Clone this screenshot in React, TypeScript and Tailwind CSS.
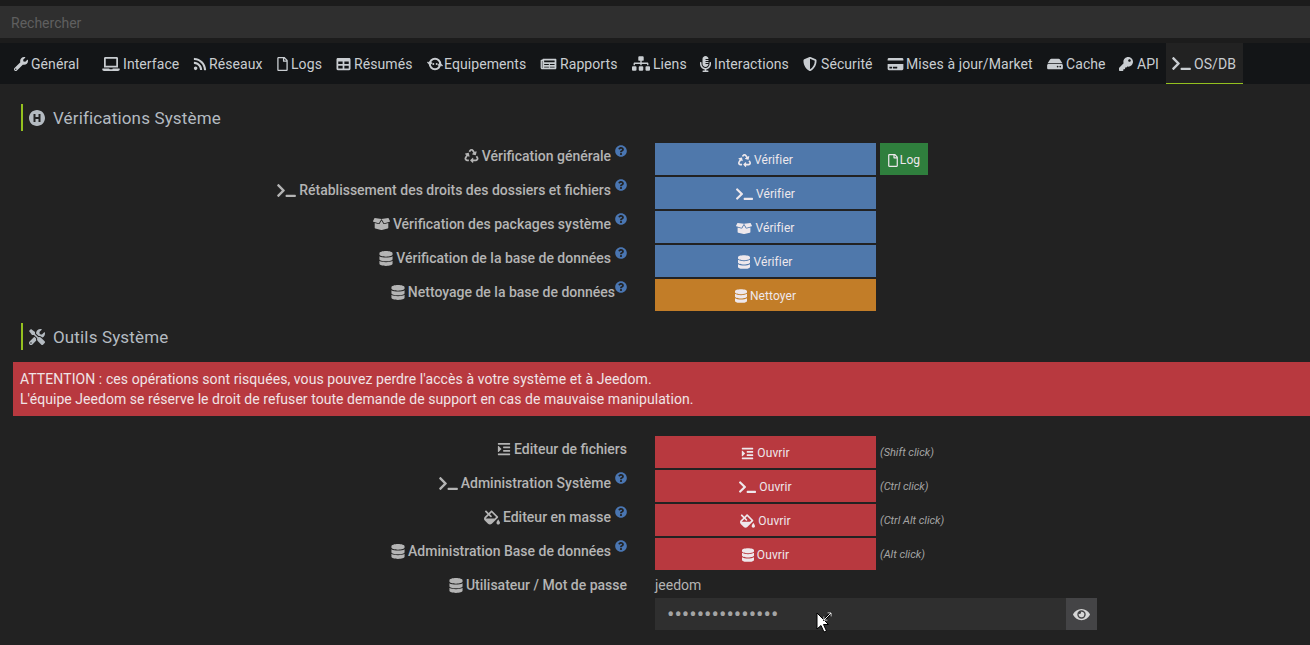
import { ReactNode } from "react";
import {
  FaWrench,
  FaLaptop,
  FaRss,
  FaRegFile,
  FaTable,
  FaNewspaper,
  FaSitemap,
  FaMicrophoneAlt,
  FaShieldAlt,
  FaCreditCard,
  FaHdd,
  FaKey,
  FaTerminal,
  FaHospitalSymbol,
  FaRecycle,
  FaBoxOpen,
  FaDatabase,
  FaTools,
  FaIndent,
  FaFillDrip,
  FaEye,
  FaQuestionCircle,
} from "react-icons/fa";

// jeedom's own "equipements" glyph, not in the icon packs
function EquipIcon() {
  return (
    <svg viewBox="0 0 16 16" className="w-[16px] h-[16px]" fill="none" stroke="currentColor">
      <circle cx="8" cy="8" r="5.2" strokeWidth="2" />
      <path d="M0.5 6 L3 8.5 L5 6.5 M15.5 10 L13 7.5 L11 9.5" strokeWidth="1.4" />
      <circle cx="6.3" cy="8" r="1" fill="currentColor" stroke="none" />
      <circle cx="9.7" cy="8" r="1" fill="currentColor" stroke="none" />
    </svg>
  );
}

const tabs = [
  { label: "Général", icon: <FaWrench className="w-[14px] h-[14px]" />, w: "w-[88px]", gap: "gap-[3px]" },
  { label: "Interface", icon: <FaLaptop className="w-[18px] h-[14px]" />, w: "w-[91px]", gap: "gap-[3px]" },
  { label: "Réseaux", icon: <FaRss className="w-[14px] h-[14px]" />, w: "w-[84px]", gap: "gap-[2px]" },
  { label: "Logs", icon: <FaRegFile className="w-[11px] h-[14px]" />, w: "w-[59px]", gap: "gap-[3px]" },
  { label: "Résumés", icon: <FaTable className="w-[15px] h-[14px]" />, w: "w-[91px]", gap: "gap-[3px]" },
  { label: "Equipements", icon: <EquipIcon />, w: "w-[113px]", gap: "gap-[1px]" },
  { label: "Rapports", icon: <FaNewspaper className="w-[17px] h-[14px]" />, w: "w-[92px]", gap: "gap-[3px]" },
  { label: "Liens", icon: <FaSitemap className="w-[18px] h-[15px]" />, w: "w-[68px]", gap: "gap-[3px]" },
  { label: "Interactions", icon: <FaMicrophoneAlt className="w-[11px] h-[16px]" />, w: "w-[103px]", gap: "gap-[3px]" },
  { label: "Sécurité", icon: <FaShieldAlt className="w-[14px] h-[14px]" />, w: "w-[84px]", gap: "gap-[4px]" },
  { label: "Mises à jour/Market", icon: <FaCreditCard className="w-[17px] h-[14px]" />, w: "w-[160px]", gap: "gap-[2px]" },
  { label: "Cache", icon: <FaHdd className="w-[16px] h-[14px]" />, w: "w-[72px]", gap: "gap-[3px]" },
  { label: "API", icon: <FaKey className="w-[14px] h-[14px]" />, w: "w-[54px]", gap: "gap-[4px]" },
];

function SectionTitle({ icon, children }: { icon: ReactNode; children: ReactNode }) {
  return (
    <div className="ml-[21px] h-[27px] border-l-2 border-[#94c11f] pl-[6px] flex items-center gap-[8px] text-[17px] tracking-[0.15px] text-[#b4bbc1]">
      <span className="w-[16px] flex justify-center">{icon}</span>
      <span className="pt-[2px]">{children}</span>
    </div>
  );
}

function Row({
  icon,
  label,
  help = true,
  tight = false,
  color,
  btnIcon,
  btnLabel,
  side,
}: {
  icon: ReactNode;
  label: string;
  help?: boolean;
  tight?: boolean;
  color: string;
  btnIcon: ReactNode;
  btnLabel: string;
  side?: ReactNode;
}) {
  return (
    <div className="flex h-[32px] mb-[2px]">
      <div className="w-[614px] flex justify-end items-start pt-[3px] text-[14px] font-medium text-[#b4b4b4]">
        <span className="flex items-center gap-[3px] h-[20px]">
          {icon}
          {label}
        </span>
        {help ? (
          <FaQuestionCircle
            className={`w-[12px] h-[12px] text-[#4a76b2] shrink-0 -mt-[1px] ${tight ? "" : "ml-[4px]"}`}
          />
        ) : null}
      </div>
      <div
        className={`ml-[28px] w-[221px] pt-[2px] flex items-center justify-center gap-[3px] text-[12px] tracking-[0.1px] text-[#eee8ec] ${color}`}
      >
        {btnIcon}
        {btnLabel}
      </div>
      {side}
    </div>
  );
}

const dbLabel = "w-[14px] h-[15px]";
const dbBtn = "w-[12px] h-[14px]";
const termLabel = "w-[19px] h-[15px]";
const termBtn = "w-[17px] h-[14px]";
const blue = "bg-[#4f78ab]";
const orange = "bg-[#c27d28]";
const red = "bg-[#b8393f]";

function ClickHint({ text }: { text: string }) {
  return <span className="ml-[4px] pt-[2px] self-center text-[11px] italic text-[#a5a5a5]">{text}</span>;
}

export default function App() {
  return (
    <div
      className="relative h-[645px] w-[1310px] overflow-hidden bg-[#222222]"
      style={{ fontFamily: "Roboto, sans-serif" }}
    >
      {/* Top bar + search */}
      <div className="h-[6px] bg-[#1c1c1c]" />
      <div className="h-[32px] bg-[#2f2f2f] pl-[11px] pt-[2px] flex items-center text-[14px] text-[#5f5f5f]">
        Rechercher
      </div>

      {/* Tabs */}
      <div className="h-[5px] bg-[#1c1c1c]" />
      <div className="h-[41px] bg-[#131517] pl-[7px] flex text-[14px] tracking-[0.08px] text-[#c9cdd1]">
        {tabs.map((t) => (
          <div key={t.label} className={`${t.w} ${t.gap} pl-[7px] flex items-center`}>
            {t.icon}
            <span className="pt-[2px]">{t.label}</span>
          </div>
        ))}
        <div className="w-[77px] pl-[6px] flex items-center gap-[3px] bg-[#222222] border-b border-b-[#94c11f]">
          <FaTerminal className="w-[19px] h-[15px]" />
          <span className="pt-[2px]">OS/DB</span>
        </div>
      </div>

      {/* Vérifications */}
      <div className="pt-[20px]">
        <SectionTitle icon={<FaHospitalSymbol className="w-[16px] h-[16px]" />}>Vérifications Système</SectionTitle>
      </div>
      <div className="pt-[12px] pl-[13px]">
        <Row
          icon={<FaRecycle className="w-[15px] h-[14px]" />}
          label="Vérification générale"
          color={blue}
          btnIcon={<FaRecycle className="w-[13px] h-[13px]" />}
          btnLabel="Vérifier"
          side={
            <div className="ml-[4px] w-[48px] pt-[2px] flex items-center justify-center gap-[2px] bg-[#2f7f3d] text-[12px] tracking-[0.1px] text-[#eee8ec]">
              <FaRegFile className="w-[10px] h-[13px]" />
              Log
            </div>
          }
        />
        <Row
          icon={<FaTerminal className={termLabel} />}
          label="Rétablissement des droits des dossiers et fichiers"
          color={blue}
          btnIcon={<FaTerminal className={termBtn} />}
          btnLabel="Vérifier"
        />
        <Row
          icon={<FaBoxOpen className="w-[17px] h-[14px]" />}
          label="Vérification des packages système"
          color={blue}
          btnIcon={<FaBoxOpen className="w-[16px] h-[13px]" />}
          btnLabel="Vérifier"
        />
        <Row
          icon={<FaDatabase className={dbLabel} />}
          label="Vérification de la base de données"
          color={blue}
          btnIcon={<FaDatabase className={dbBtn} />}
          btnLabel="Vérifier"
        />
        <Row
          icon={<FaDatabase className={dbLabel} />}
          label="Nettoyage de la base de données"
          tight
          color={orange}
          btnIcon={<FaDatabase className={dbBtn} />}
          btnLabel="Nettoyer"
        />
      </div>

      {/* Outils */}
      <div className="pt-[10px]">
        <SectionTitle icon={<FaTools className="w-[18px] h-[18px]" />}>Outils Système</SectionTitle>
      </div>
      <div className="mt-[12px] ml-[13px] h-[54px] bg-[#b8393f] px-[7px] pt-[7px] text-[14px] leading-[20px] text-[#f0e4e6]">
        <div className="tracking-[0.08px]">
          ATTENTION : ces opérations sont risquées, vous pouvez perdre l'accès à votre système et à Jeedom.
        </div>
        <div className="tracking-[0.05px]">
          L'équipe Jeedom se réserve le droit de refuser toute demande de support en cas de mauvaise manipulation.
        </div>
      </div>

      <div className="pt-[20px] pl-[13px]">
        <Row
          icon={<FaIndent className="w-[14px] h-[14px]" />}
          label="Editeur de fichiers"
          help={false}
          color={red}
          btnIcon={<FaIndent className="w-[13px] h-[13px]" />}
          btnLabel="Ouvrir"
          side={<ClickHint text="(Shift click)" />}
        />
        <Row
          icon={<FaTerminal className={termLabel} />}
          label="Administration Système"
          color={red}
          btnIcon={<FaTerminal className={termBtn} />}
          btnLabel="Ouvrir"
          side={<ClickHint text="(Ctrl click)" />}
        />
        <Row
          icon={<FaFillDrip className="w-[16px] h-[15px]" />}
          label="Editeur en masse"
          color={red}
          btnIcon={<FaFillDrip className="w-[15px] h-[14px]" />}
          btnLabel="Ouvrir"
          side={<ClickHint text="(Ctrl Alt click)" />}
        />
        <Row
          icon={<FaDatabase className={dbLabel} />}
          label="Administration Base de données"
          color={red}
          btnIcon={<FaDatabase className={dbBtn} />}
          btnLabel="Ouvrir"
          side={<ClickHint text="(Alt click)" />}
        />

        {/* Credentials */}
        <div className="flex h-[26px]">
          <div className="w-[614px] flex justify-end items-start pt-[3px] text-[14px] font-medium text-[#b4b4b4]">
            <span className="flex items-center gap-[3px] h-[20px]">
              <FaDatabase className={dbLabel} />
              Utilisateur / Mot de passe
            </span>
          </div>
          <div className="ml-[28px] pt-[3px] text-[14px] text-[#b4b4b4]">jeedom</div>
        </div>
        <div className="ml-[642px] flex h-[32px] w-[442px]">
          <input
            type="password"
            readOnly
            defaultValue="aaaaaaaaaaaaaaa"
            className="min-w-0 flex-1 bg-[#2f2f2f] pl-[12px] text-[22px] text-[#a5a5a5] outline-none"
          />
          <div className="w-[31px] bg-[#444446] flex items-center justify-center text-[#d6d6d6]">
            <FaEye className="w-[17px] h-[15px]" />
          </div>
        </div>
      </div>

      {/* Mouse pointer caught in the capture */}
      <svg viewBox="0 0 16 24" className="absolute left-[816px] top-[612px] w-[16px] h-[24px]">
        <path d="M1 1 L1 17 L5 13.5 L8 20 L10.5 19 L7.5 12.5 L12.5 12.5 Z" fill="#fff" stroke="#000" strokeWidth="1" />
      </svg>
      <svg viewBox="0 0 10 10" className="absolute left-[823px] top-[612px] w-[9px] h-[9px]">
        <path d="M1 9 L9 1 M5 1 H9 V5 M1 5 V9 H5" fill="none" stroke="#000" strokeWidth="2.6" />
        <path d="M1 9 L9 1 M5 1 H9 V5 M1 5 V9 H5" fill="none" stroke="#fff" strokeWidth="1" />
      </svg>
    </div>
  );
}
